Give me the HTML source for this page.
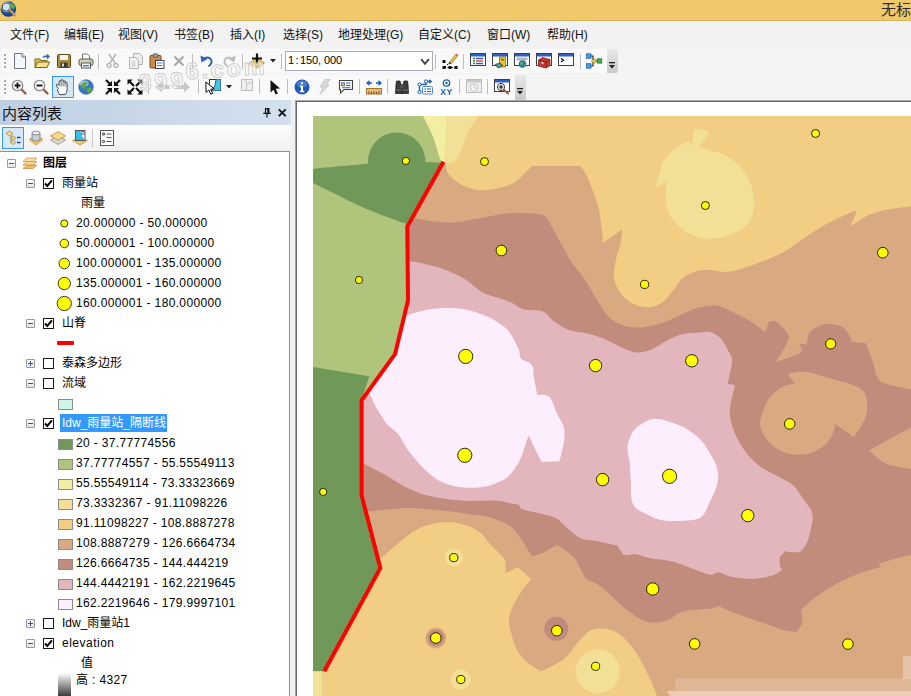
<!DOCTYPE html><html lang="zh"><head><meta charset="utf-8"><title>ArcMap</title><style>
*{box-sizing:border-box;margin:0;padding:0}
html,body{width:911px;height:696px;overflow:hidden;background:#F0F0F0}
body{position:relative;font-family:"Liberation Sans","Noto Sans CJK SC",sans-serif;font-size:12px;color:#000}
.abs{position:absolute}
.title{left:0;top:0;width:911px;height:21px;background:#F0C869;border-bottom:1px solid #D9B45C}
.ttext{left:881px;top:0;height:21px;line-height:20px;font-size:15px;color:#2b2b2b;white-space:nowrap}
.menubar{left:0;top:21px;width:911px;height:27px;background:#F2F2F2}
.mi{top:27px;height:16px;line-height:16px;white-space:nowrap;font-size:12px;color:#111}
.tbarea{left:0;top:48px;width:911px;height:53px;background:#F4F4F4}
.tb{background:#F9F9F9;border-radius:2px}
.grip{width:2px;height:2px;background:#A8A8A8}
.sep{width:1px;height:15px;background:#BDBDBD}
.ovf{background:linear-gradient(#E9E9E9,#C9C9C9);border-radius:0 2px 2px 0}
.combo{left:285px;top:51px;width:148px;height:20px;background:#fff;border:1px solid #A9ADB6}
.combo span{position:absolute;left:2px;top:1px;font-size:11px;line-height:15px;white-space:nowrap}.combo i{display:inline-block;width:6px;text-align:center;font-style:normal}
.toc{left:0;top:100px;width:291px;height:596px;background:#F3F3F3}
.tochead{left:0;top:100px;width:291px;height:25px;background:linear-gradient(90deg,#BFCFE2,#D3E0EE)}
.tochead .t{position:absolute;left:2px;top:3px;font-size:15px;line-height:22px;color:#111}
.toctb{left:0;top:125px;width:291px;height:26px;background:linear-gradient(#FDFDFD,#F0F0F0)}
.tree{left:0;top:151px;width:290px;height:546px;background:#fff;border-top:1px solid #8A8F97;border-right:1px solid #8A8F97}
.row{position:absolute;height:20px;line-height:20px;white-space:nowrap;font-size:12px;letter-spacing:.35px}
.cjk{letter-spacing:0}
.exp{position:absolute;width:9px;height:9px;border:1px solid #9A9A9A;border-radius:1px;background:linear-gradient(#fff,#E4E4E4)}
.exp:before{content:"";position:absolute;left:1px;top:3px;width:5px;height:1px;background:#3C4FA0}
.exp.plus:after{content:"";position:absolute;left:3px;top:1px;width:1px;height:5px;background:#3C4FA0}
.cb{position:absolute;width:11px;height:11px;border:1px solid #1a1a1a;background:#fff}
.sw{position:absolute;width:15px;height:11px;border:1px solid #8C8C8C}
.mapframe{left:295px;top:100px;width:616px;height:596px;background:#fff;border-left:1px solid #A2A2A2;border-top:1px solid #A8A8A8;box-shadow:inset 1px 1px 0 #696969}
.map{position:absolute;left:313px;top:116px}
svg.ic{position:absolute;overflow:visible}
</style></head><body>
<div class="abs title"></div>
<svg class="ic" style="left:0;top:0" width="18" height="19" viewBox="0 0 18 19"><defs><radialGradient id="gg" cx=".4" cy=".35" r=".7"><stop offset="0" stop-color="#2F86D8"/><stop offset="1" stop-color="#0B3878"/></radialGradient></defs><circle cx="8.300" cy="9" r="7.800" fill="url(#gg)"/><path d="M10.500 3.500q2.500-.5 4 1.500.8 2-.3 4-1.500.5-2.200-1t-1.800-1.500q-1-1.500.3-3zM11.500 11q1.500-.5 2.500.5-.5 2-2 2.500-1-1.500-.5-3z" fill="#4FB04A"/><circle cx="6.300" cy="7" r="3.900" fill="#C5E8F6" stroke="#DDE6EA" stroke-width="2.200"/><circle cx="6.300" cy="7" r="4" fill="none" stroke="#4A4A4A" stroke-width="1.100"/><path d="M9.600 10.300l5 5" stroke="#C0703A" stroke-width="2.200" stroke-linecap="round"/><path d="M10 10.200l4.600 4.600" stroke="#F4D9C0" stroke-width=".7" stroke-linecap="round"/></svg>
<div class="abs ttext">无标题 - ArcMap</div>
<div class="abs menubar"></div>
<div class="abs mi" style="left:10px">文件(F)</div>
<div class="abs mi" style="left:64px">编辑(E)</div>
<div class="abs mi" style="left:118px">视图(V)</div>
<div class="abs mi" style="left:174px">书签(B)</div>
<div class="abs mi" style="left:230px">插入(I)</div>
<div class="abs mi" style="left:283px">选择(S)</div>
<div class="abs mi" style="left:338px">地理处理(G)</div>
<div class="abs mi" style="left:418px">自定义(C)</div>
<div class="abs mi" style="left:487px">窗口(W)</div>
<div class="abs mi" style="left:547px">帮助(H)</div>
<div class="abs tbarea"></div>
<div class="abs tb" style="left:1px;top:49px;width:606px;height:24px"></div>
<div class="abs ovf" style="left:607px;top:49px;width:11px;height:24px"></div>
<div class="abs tb" style="left:1px;top:75px;width:514px;height:25px"></div>
<div class="abs ovf" style="left:515px;top:75px;width:11px;height:25px"></div>
<div class="abs grip" style="left:4px;top:54px"></div>
<div class="abs grip" style="left:4px;top:58px"></div>
<div class="abs grip" style="left:4px;top:62px"></div>
<div class="abs grip" style="left:4px;top:66px"></div>
<div class="abs grip" style="left:4px;top:80px"></div>
<div class="abs grip" style="left:4px;top:84px"></div>
<div class="abs grip" style="left:4px;top:88px"></div>
<div class="abs grip" style="left:4px;top:92px"></div>
<div class="abs sep" style="left:98px;top:54px"></div>
<div class="abs sep" style="left:192px;top:54px"></div>
<div class="abs sep" style="left:242px;top:54px"></div>
<div class="abs sep" style="left:281px;top:54px"></div>
<div class="abs sep" style="left:435px;top:54px"></div>
<div class="abs sep" style="left:463px;top:54px"></div>
<div class="abs sep" style="left:580px;top:54px"></div>
<div class="abs sep" style="left:148px;top:79px"></div>
<div class="abs sep" style="left:198px;top:79px"></div>
<div class="abs sep" style="left:259px;top:79px"></div>
<div class="abs sep" style="left:287px;top:79px"></div>
<div class="abs sep" style="left:359px;top:79px"></div>
<div class="abs sep" style="left:387px;top:79px"></div>
<div class="abs sep" style="left:459px;top:79px"></div>
<div class="abs sep" style="left:487px;top:79px"></div>
<svg class="ic" style="left:608px;top:62px" width="8" height="8" viewBox="0 0 8 8"><rect x="1" y="0" width="6" height="1.3" fill="#222"/><path d="M1 3h6L4 6.5z" fill="#222"/></svg>
<svg class="ic" style="left:516px;top:88px" width="8" height="8" viewBox="0 0 8 8"><rect x="1" y="0" width="6" height="1.3" fill="#222"/><path d="M1 3h6L4 6.5z" fill="#222"/></svg>
<div class="abs combo"><span><i>1</i><i>:</i><i>1</i><i>5</i><i>0</i><i style="text-align:left">,</i><i>0</i><i>0</i><i>0</i></span></div>
<svg class="ic" style="left:420px;top:58px" width="10" height="8" viewBox="0 0 10 8"><path d="M1.200 1.200L5 5.800L8.800 1.200" fill="none" stroke="#444" stroke-width="1.900"/></svg>
<svg class="ic" style="left:11.5px;top:53.0px" width="16" height="16" viewBox="0 0 16 16"><path d="M2.5 .5h7.5l3.5 3.5v11.5h-11z" fill="#F4F8FD" stroke="#6F7683"/><path d="M10 .5v3.5h3.5" fill="#DCE6F2" stroke="#6F7683"/></svg>
<svg class="ic" style="left:33.5px;top:53.0px" width="16" height="16" viewBox="0 0 16 16"><path d="M1 14.5v-8.5h5l1 1.5h6v7z" fill="#E3C25A" stroke="#7A6418"/><path d="M1 14.5l2.5-5.5h12l-2.5 5.5z" fill="#F6E08C" stroke="#7A6418"/><path d="M8 5q2-3.5 5-2.5v-2l3 3-3 3v-2q-2.5-.5-5 .5z" fill="#2D6CC0"/></svg>
<svg class="ic" style="left:55.5px;top:53.0px" width="16" height="16" viewBox="0 0 16 16"><rect x="1.5" y="1.5" width="13" height="13" rx="1" fill="#A98E3A" stroke="#5B4A14"/><rect x="4" y="2" width="8" height="5" fill="#F4F4F4"/><rect x="4.5" y="9.5" width="7" height="5" fill="#3A3A3A"/><rect x="6" y="10.5" width="2" height="3" fill="#ddd"/></svg>
<svg class="ic" style="left:77.5px;top:53.0px" width="16" height="16" viewBox="0 0 16 16"><path d="M4.5 6v-5h5l2 2v3" fill="#fff" stroke="#777"/><rect x="1" y="6" width="14" height="6.5" rx="2" fill="#D8D2BC" stroke="#555"/><rect x="3.5" y="10" width="9" height="5" fill="#fff" stroke="#555"/><rect x="5" y="12" width="6" height="1.4" fill="#3A7BD5"/><circle cx="12.5" cy="8" r=".8" fill="#4C4"/></svg>
<svg class="ic" style="left:105.0px;top:53.0px" width="16" height="16" viewBox="0 0 16 16"><path d="M4 1l6 9M11 1l-6 9" stroke="#B4B4B4" stroke-width="1.4" fill="none"/><circle cx="4" cy="12.5" r="2" fill="none" stroke="#B4B4B4" stroke-width="1.3"/><circle cx="11" cy="12.5" r="2" fill="none" stroke="#B4B4B4" stroke-width="1.3"/></svg>
<svg class="ic" style="left:128.0px;top:53.0px" width="16" height="16" viewBox="0 0 16 16"><path d="M5.500 .5h6l3 3v8h-9z" fill="#EDEDED" stroke="#B4B4B4"/><path d="M1.500 4.500h6l3 3v8h-9z" fill="#F2F2F2" stroke="#B4B4B4"/><path d="M3.500 9h4M3.500 11h4M3.500 13h4" stroke="#C4C4C4"/></svg>
<svg class="ic" style="left:149.0px;top:53.0px" width="16" height="16" viewBox="0 0 16 16"><rect x="1" y="2.500" width="11" height="12.500" rx="1" fill="#C98B47" stroke="#7A4B1A"/><rect x="4" y=".8" width="5" height="3.400" rx="1" fill="#9A9A9A" stroke="#555" stroke-width=".7"/><rect x="6.500" y="7.500" width="8.500" height="8" fill="#fff" stroke="#445"/><path d="M8 10h5.500M8 12.500h5.500" stroke="#3A7BD5" stroke-width="1.200"/></svg>
<svg class="ic" style="left:171.0px;top:53.0px" width="16" height="16" viewBox="0 0 16 16"><path d="M3.500 3.500l9 9M12.500 3.500l-9 9" stroke="#ABABAB" stroke-width="2.300"/></svg>
<svg class="ic" style="left:199.0px;top:53.0px" width="16" height="16" viewBox="0 0 16 16"><path d="M4 6.500q5-4 8 0q2 3.500-2.500 7" fill="none" stroke="#2F62B8" stroke-width="2"/><path d="M1.500 2.500l1 7 6-3.500z" fill="#2F62B8"/></svg>
<svg class="ic" style="left:221.0px;top:53.0px" width="16" height="16" viewBox="0 0 16 16"><path d="M12 6.500q-5-4-8 0q-2 3.500 2.500 7" fill="none" stroke="#BDBDBD" stroke-width="2"/><path d="M14.500 2.500l-1 7-6-3.500z" fill="#BDBDBD"/></svg>
<svg class="ic" style="left:249.0px;top:53.0px" width="16" height="16" viewBox="0 0 16 16"><path d="M.5 10l7.500-4.500 7.500 4.500-7.500 5z" fill="#F3CF72" stroke="#B18A2E" stroke-width=".8"/><path d="M8 .5v10M3 5.500h10" stroke="#111" stroke-width="2.200"/></svg>
<svg class="ic" style="left:270px;top:59px" width="6" height="4" viewBox="0 0 6 4"><path d="M0 0h6L3 3.500z" fill="#222"/></svg>
<svg class="ic" style="left:441.5px;top:53.0px" width="16" height="16" viewBox="0 0 16 16"><path d="M2 14.500h11.500M2.500 14.500l5.500-5.500" stroke="#111" stroke-width="1" stroke-dasharray="2 1.500"/><rect x=".5" y="7" width="3" height="3" fill="#111"/><rect x=".5" y="13" width="3" height="3" fill="#111"/><rect x="6.500" y="13" width="3" height="3" fill="#111"/><rect x="12.500" y="13" width="3" height="3" fill="#111"/><path d="M7.500 9l6-7.500 2 1.700-6 7.300z" fill="#EEC04A" stroke="#8A6A1A" stroke-width=".6"/><path d="M13.500 1.500l1-1 2 1.700-1 1z" fill="#E2574C"/><path d="M7.500 9l-.8 2.500 2.800-1z" fill="#333"/></svg>
<svg class="ic" style="left:470.0px;top:52.0px" width="16" height="16" viewBox="0 0 16 16"><rect x=".5" y="1.500" width="15" height="12" fill="#fff" stroke="#3B3F4A"/><rect x="1" y="2" width="14" height="2.500" fill="#2F5FC0"/><path d="M3 6.500h2M3 9h2M3 11.500h2" stroke="#2B8A2B" stroke-width="1.300"/><path d="M6 6.500h7M6 11.500h7" stroke="#2F5FC0" stroke-width="1.300"/><path d="M6 9h7" stroke="#D33" stroke-width="1.300"/></svg>
<svg class="ic" style="left:492.0px;top:52.0px" width="16" height="16" viewBox="0 0 16 16"><rect x=".5" y="1.500" width="15" height="12" fill="#fff" stroke="#3B3F4A"/><rect x="1" y="2" width="14" height="2.500" fill="#2F5FC0"/><rect x="7.500" y="5" width="6" height="10" fill="#E6C530" stroke="#7A6410" stroke-width=".7"/><rect x="9" y="7" width="3" height="1.400" fill="#7A6410"/><path d="M3 12.500l5-1.500 3 2.500-5 2.500z" fill="#3F7FCB" stroke="#224" stroke-width=".6"/><circle cx="7" cy="13.500" r="1.500" fill="#58B04A"/></svg>
<svg class="ic" style="left:514.0px;top:52.0px" width="16" height="16" viewBox="0 0 16 16"><rect x=".5" y="1.500" width="15" height="12" fill="#fff" stroke="#3B3F4A"/><rect x="1" y="2" width="14" height="2.500" fill="#2F5FC0"/><rect x="3" y="6" width="10" height="2" fill="#C9CDD6" stroke="#777" stroke-width=".5"/><circle cx="8.500" cy="12" r="3.800" fill="#2B6FC4"/><path d="M6 10.500q2-1.500 3 0t-1 2.500-2-1zM10 12q1.500 0 1.500 1.500l-1.500 1z" fill="#55B548"/></svg>
<svg class="ic" style="left:536.0px;top:52.0px" width="16" height="16" viewBox="0 0 16 16"><rect x=".5" y="1.500" width="15" height="12" fill="#fff" stroke="#3B3F4A"/><rect x="1" y="2" width="14" height="2.500" fill="#2F5FC0"/><path d="M2.500 8l4-2.500 7.500 2v6l-4 2.500-7.500-2z" fill="#C33B31" stroke="#6A1512" stroke-width=".7"/><path d="M2.500 8l7.500 2 4-2.500M10 10v6" fill="none" stroke="#6A1512" stroke-width=".7"/><rect x="5.500" y="10" width="2" height="1.800" fill="#ddd"/></svg>
<svg class="ic" style="left:558.0px;top:52.0px" width="16" height="16" viewBox="0 0 16 16"><rect x=".5" y="1.500" width="15" height="12" fill="#fff" stroke="#3B3F4A"/><rect x="1" y="2" width="14" height="2.500" fill="#2F5FC0"/><path d="M3 6.500l2.500 1.800-2.500 1.800" fill="none" stroke="#111" stroke-width="1.200"/></svg>
<svg class="ic" style="left:586.0px;top:53.0px" width="16" height="16" viewBox="0 0 16 16"><path d="M3.500 3h3.500v10h-3.500M7 8h6" fill="none" stroke="#222" stroke-width="1.100"/><rect x=".5" y=".8" width="4.500" height="4.500" fill="#3FA0E8" stroke="#1D5C9C" stroke-width=".7"/><rect x=".5" y="10.700" width="4.500" height="4.500" fill="#3FA0E8" stroke="#1D5C9C" stroke-width=".7"/><ellipse cx="8" cy="8" rx="2.200" ry="2" fill="#F3D24A" stroke="#8A6A1A" stroke-width=".7"/><rect x="11.500" y="5.800" width="4.300" height="4.300" fill="#4BB04B" stroke="#1F6A1F" stroke-width=".7"/></svg>
<svg class="ic" style="left:10.5px;top:79.0px" width="16" height="16" viewBox="0 0 16 16"><path d="M9.500 9.500l5 5" stroke="#A05A3A" stroke-width="2.400" stroke-linecap="round"/><circle cx="6.500" cy="6.500" r="5.200" fill="#FAFAFA" stroke="#8E8E8E" stroke-width="1.300"/><path d="M3.500 6.500h6M6.500 3.500v6" stroke="#111" stroke-width="1.800"/></svg>
<svg class="ic" style="left:32.5px;top:79.0px" width="16" height="16" viewBox="0 0 16 16"><path d="M9.500 9.500l5 5" stroke="#A05A3A" stroke-width="2.400" stroke-linecap="round"/><circle cx="6.500" cy="6.500" r="5.200" fill="#FAFAFA" stroke="#8E8E8E" stroke-width="1.300"/><path d="M3.500 6.500h6" stroke="#111" stroke-width="1.800"/></svg>
<div class="abs" style="left:52px;top:76px;width:22px;height:22px;border:1px solid #3399FF;background:#D6E8F8"></div>
<svg class="ic" style="left:55.0px;top:79.0px" width="16" height="16" viewBox="0 0 16 16"><path d="M3.500 9.500l-2-2.500q-.8-1.200.4-1.600t2.200 1.200v-4q0-1 1-1t1 1v-1q0-1 1-1t1 1v1q0-1 1-1t1 1v1.500q0-1 1-1t1 1v6.500q0 3-2 5h-5.500q-1.500-2-2.100-5z" fill="#fff" stroke="#333" stroke-width=".9"/><path d="M6.100 3v4.500M8.100 3v4.500M10.100 3.500v4" stroke="#333" stroke-width=".7"/></svg>
<svg class="ic" style="left:77.5px;top:79.0px" width="16" height="16" viewBox="0 0 16 16"><circle cx="8" cy="8" r="7.300" fill="#3A77C9" stroke="#2A5A9E" stroke-width=".6"/><ellipse cx="6" cy="4.500" rx="4.500" ry="3" fill="#BFD9F5" opacity=".75"/><path d="M3.500 5q2.500-2.500 5.500-2 1.500 1.500-.5 3t-1.500 3.500-2.500-.5-1-4zM9 9.500q2.500-1.500 5 0-.5 3.500-3.500 4.800-2-1.800-1.500-4.800z" fill="#5DAE3F"/></svg>
<svg class="ic" style="left:105.0px;top:79.0px" width="16" height="16" viewBox="0 0 16 16"><path d="M1 1l4.500 4.500M15 1l-4.500 4.500M1 15l4.500-4.500M15 15l-4.500-4.500" stroke="#111" stroke-width="2.200"/><path d="M7 1.800v5.200h-5.200zM9 1.800v5.200h5.200zM7 14.200v-5.200h-5.200zM9 14.200v-5.200h5.200z" fill="#111"/></svg>
<svg class="ic" style="left:127.0px;top:79.0px" width="16" height="16" viewBox="0 0 16 16"><path d="M2.500 2.500l4.500 4.500M13.500 2.500l-4.500 4.500M2.500 13.500l4.500-4.500M13.500 13.500l-4.500-4.500" stroke="#111" stroke-width="2.200"/><path d="M.5 5.700v-5.200h5.200zM15.500 5.700v-5.200h-5.200zM.5 10.300v5.200h5.200zM15.500 10.300v5.200h-5.200z" fill="#111"/></svg>
<svg class="ic" style="left:155.0px;top:79.0px" width="16" height="16" viewBox="0 0 16 16"><path d="M1 8l6-5.500v3.500h7.500v4h-7.500v3.500z" fill="#C8C8C8"/></svg>
<svg class="ic" style="left:175.0px;top:79.0px" width="16" height="16" viewBox="0 0 16 16"><path d="M15 8l-6-5.500v3.500h-7.500v4h7.500v3.500z" fill="#C8C8C8"/></svg>
<svg class="ic" style="left:205.0px;top:79.0px" width="16" height="16" viewBox="0 0 16 16"><rect x="4.500" y=".5" width="11" height="11" fill="#fff" stroke="#333"/><path d="M7 11.500l3-5 1-6h4.500v11z" fill="#3CC3EE"/><path d="M11 .5l-1 6-3 5" fill="none" stroke="#333" stroke-width=".8"/><path d="M.8 3l.3 10.500 2.700-2.500 2 4.300 1.900-.9-2-4.200 3.600-.4z" fill="#fff" stroke="#111" stroke-width="1"/></svg>
<svg class="ic" style="left:226px;top:85px" width="6" height="4" viewBox="0 0 6 4"><path d="M0 0h6L3 3.500z" fill="#222"/></svg>
<svg class="ic" style="left:238.5px;top:77.0px" width="16" height="16" viewBox="0 0 16 16"><rect x="2.500" y="2.500" width="11" height="11" fill="#EFEFEF" stroke="#BDBDBD"/><path d="M6 2.500l2 4.500 5-2M8 7l-1 6.500" fill="none" stroke="#C6C6C6"/></svg>
<svg class="ic" style="left:267.0px;top:79.0px" width="16" height="16" viewBox="0 0 16 16"><path d="M3.500 1v12.500l3-2.800 2.200 4.800 2.200-1-2.200-4.700 4.300-.3z" fill="#111"/></svg>
<svg class="ic" style="left:293.5px;top:79.0px" width="16" height="16" viewBox="0 0 16 16"><circle cx="8" cy="8" r="7.500" fill="#1F57B5"/><ellipse cx="8" cy="5" rx="5.500" ry="3.500" fill="#6C9BE6" opacity=".55"/><path d="M6 6.800h3v5h1.300v1.400h-4.600v-1.400h1.300v-3.600h-1zM7 3.200h2v2h-2z" fill="#fff"/></svg>
<svg class="ic" style="left:316.0px;top:79.0px" width="16" height="16" viewBox="0 0 16 16"><path d="M9 .5h5l-4 5.500h3l-9 9.500 3-7.500h-3z" fill="#D9D9D9" stroke="#B9B9B9" stroke-width=".7"/></svg>
<svg class="ic" style="left:337.5px;top:79.0px" width="16" height="16" viewBox="0 0 16 16"><path d="M1.500 1.500h13v9h-8.500l-3.500 3.500v-3.500h-1z" fill="#fff" stroke="#444" stroke-width="1.100"/><rect x="3.500" y="3.800" width="3" height="3" fill="#E8C43C" stroke="#2F5FC0" stroke-width=".8"/><path d="M8 4h4.500M8 6.500h4.500M4 8.700h8.500" stroke="#2F5FC0" stroke-width="1.100"/></svg>
<svg class="ic" style="left:366.0px;top:79.0px" width="16" height="16" viewBox="0 0 16 16"><path d="M1 4h5M10 4h5" stroke="#1D5FAF" stroke-width="1.600"/><path d="M0 4l3.500-3v6zM16 4l-3.500-3v6z" fill="#1D5FAF"/><rect x=".5" y="9.500" width="15" height="5.500" fill="#E8BE78" stroke="#A8742C"/><path d="M3 12v3M5.500 12.800v2.200M8 12v3M10.500 12.800v2.200M13 12v3" stroke="#6A4414" stroke-width=".9"/></svg>
<svg class="ic" style="left:393.5px;top:79.0px" width="16" height="16" viewBox="0 0 16 16"><path d="M2.500 2h3.500l1 3.500 1 9h-6.500l.5-9zM10 2h3.500l.5 3.500.5 9h-6.500l1-9z" fill="#3A3A3A" stroke="#111" stroke-width=".7"/><rect x="6.500" y="5" width="3" height="4" fill="#555"/><path d="M2 11h5M9 11h5" stroke="#777" stroke-width="1"/></svg>
<svg class="ic" style="left:416.5px;top:79.0px" width="16" height="16" viewBox="0 0 16 16"><path d="M2.500 12v-6.500h6.500v-3h4" fill="none" stroke="#1D5FAF" stroke-width="1.300"/><path d="M12 .2l3.500 2.300-3.500 2.300z" fill="#1D5FAF"/><circle cx="2.500" cy="5.500" r="1.600" fill="#fff" stroke="#1D5FAF"/><circle cx="9" cy="2.500" r="1.600" fill="#fff" stroke="#1D5FAF"/><circle cx="2.500" cy="13" r="1.600" fill="#fff" stroke="#1D5FAF"/><rect x="5.500" y="7.500" width="10" height="7.500" rx="1" fill="#F4F8FD" stroke="#5A8AC8"/><path d="M7.500 10h1.500M10 10h4M7.500 12.500h1.500M10 12.500h4" stroke="#1D5FAF" stroke-width="1"/></svg>
<svg class="ic" style="left:439px;top:79px" width="15" height="16" viewBox="0 0 15 16"><circle cx="7.500" cy="4" r="3.200" fill="#fff" stroke="#1D5FAF" stroke-width="1.300"/><circle cx="7.500" cy="4" r="1.200" fill="#1D5FAF"/><text x="7.500" y="15.500" text-anchor="middle" font-family="Liberation Sans,sans-serif" font-weight="700" font-size="8.500" fill="#1D5FAF" letter-spacing=".5">XY</text></svg>
<svg class="ic" style="left:466.0px;top:78.0px" width="16" height="16" viewBox="0 0 16 16"><rect x=".5" y="1.500" width="15" height="13" fill="#EDEDED" stroke="#BDBDBD"/><rect x="1" y="2" width="14" height="2.500" fill="#C9C9C9"/><circle cx="8" cy="9.500" r="3.800" fill="#F6F6F6" stroke="#C2C2C2"/><path d="M8 7v2.500l2 1" fill="none" stroke="#C2C2C2"/></svg>
<svg class="ic" style="left:494.0px;top:78.0px" width="16" height="16" viewBox="0 0 16 16"><rect x=".5" y="1.500" width="15" height="12" fill="#fff" stroke="#3B3F4A"/><rect x="1" y="2" width="14" height="2.500" fill="#2F5FC0"/><path d="M9.500 11.500l4.500 4" stroke="#A05A3A" stroke-width="2" stroke-linecap="round"/><circle cx="7" cy="9" r="3.600" fill="#fff" stroke="#333" stroke-width="1"/><path d="M4.800 9h4.400M7 6.800v4.400" stroke="#111" stroke-width="1.200"/></svg>
<svg class="ic" style="left:80px;top:48px" width="220" height="60" viewBox="80 48 220 60"><text transform="rotate(-3.500 140 91)" x="139" y="91" font-family="Liberation Sans,sans-serif" font-weight="700" font-size="23.500" letter-spacing="2.800" fill="#fff" fill-opacity=".38" stroke="#C2C2C2" stroke-opacity=".85" stroke-width=".9" stroke-linejoin="round">999<tspan dy="-9">6.com</tspan></text></svg>
<div class="abs toc"></div>
<div class="abs tochead"><div class="t">内容列表</div></div>
<svg class="ic" style="left:262.500px;top:108px" width="8" height="9.500" viewBox="0 0 8 9.500"><path d="M2 .6h4.500M2.500 .6v4.400M5.800 .6v4.400M4.900 .6v4.400M.3 5.300h7.400M4 5.300v4.200" stroke="#111" stroke-width="1.200" fill="none"/></svg>
<svg class="ic" style="left:278px;top:109px" width="8.500" height="7.500" viewBox="0 0 8.500 7.500"><path d="M.8 .4l6.900 6.700M7.700 .4l-6.900 6.700" stroke="#111" stroke-width="1.900"/></svg>
<div class="abs toctb"></div>
<div class="abs" style="left:2px;top:127px;width:22px;height:22px;border:1px solid #3399FF;background:#D6E8F8"></div>
<svg class="ic" style="left:5.0px;top:130.0px" width="16" height="16" viewBox="0 0 16 16"><path d="M6 3.500v9h4M6 7.500h4" fill="none" stroke="#777" stroke-width=".8"/><path d="M1 3.500l3.500-2.500 3.500 2.500-3.500 2.500z" fill="#F6D88C" stroke="#B98A30" stroke-width=".8"/><path d="M5.500 8l2.700-2 2.700 2-2.700 2z" fill="#F6D88C" stroke="#B98A30" stroke-width=".8"/><path d="M5.500 12.500l2.700-2 2.700 2-2.700 2z" fill="#F6D88C" stroke="#B98A30" stroke-width=".8"/><path d="M12 7.500h3.500M12 12.500h3.500" stroke="#1D4F8F" stroke-width="1.500"/></svg>
<svg class="ic" style="left:27.5px;top:130.0px" width="16" height="16" viewBox="0 0 16 16"><path d="M1 9.500l7 5.500 7-5.500-3-1.500h-8z" fill="#F3C86C" stroke="#B98A30" stroke-width=".7"/><path d="M4 3v7q4 2.500 8 0v-7z" fill="#C9CED6" stroke="#6F7683" stroke-width=".8"/><ellipse cx="8" cy="3" rx="4" ry="1.800" fill="#EEF1F5" stroke="#6F7683" stroke-width=".8"/></svg>
<svg class="ic" style="left:49.5px;top:130.0px" width="16" height="16" viewBox="0 0 16 16"><path d="M.5 10l7.500-4 7.500 4-7.500 4.500z" fill="#DADADA" stroke="#8A8A8A" stroke-width=".8"/><path d="M.5 6l7.500-4.500 7.500 4.500-7.500 4.500z" fill="#F6D88C" stroke="#B98A30" stroke-width=".8"/></svg>
<svg class="ic" style="left:71.5px;top:130.0px" width="16" height="16" viewBox="0 0 16 16"><path d="M.5 10.500l7.500-3 7.500 3-7.500 4.500z" fill="#F3C86C" stroke="#B98A30" stroke-width=".7"/><rect x="3.500" y=".5" width="9.500" height="10" fill="#fff" stroke="#444" stroke-width=".9"/><path d="M3.900 .9h4.500l1.500 5 3 4.200h-9z" fill="#35BDEB"/><rect x="9.500" y="1.500" width="2.500" height="3" fill="#ccc" stroke="#444" stroke-width=".5"/></svg>
<div class="abs sep" style="left:92px;top:129px;height:18px;background:#C8C8C8"></div>
<svg class="ic" style="left:98.5px;top:130.0px" width="16" height="16" viewBox="0 0 16 16"><rect x="1.500" y=".5" width="13" height="15" fill="#fff" stroke="#555"/><circle cx="4.500" cy="4" r="1.100" fill="none" stroke="#111" stroke-width=".9"/><circle cx="4.500" cy="11.500" r="1.100" fill="none" stroke="#111" stroke-width=".9"/><path d="M7.500 4h5M7.500 7.700h5M7.500 11.500h5" stroke="#555" stroke-width="1"/></svg>
<div class="abs tree"></div>
<div class="exp" style="left:7px;top:159px"></div>
<svg class="ic" style="left:22.0px;top:155.0px" width="16" height="16" viewBox="0 0 16 16"><path d="M1 13.500l4-3.500h10l-4 3.500z" fill="#F0B866" stroke="#C28A3A" stroke-width=".7"/><path d="M1 10l4-3.500h10l-4 3.500z" fill="#F6D496" stroke="#C28A3A" stroke-width=".7"/><path d="M1 6.500l4-3.500h10l-4 3.500z" fill="#F9E0B0" stroke="#C28A3A" stroke-width=".7"/></svg>
<div class="row cjk" style="left:43px;top:153px;font-weight:700">图层</div>
<div class="exp" style="left:26px;top:179px"></div>
<div class="cb" style="left:43px;top:178px"></div>
<svg class="ic" style="left:44px;top:179px" width="9" height="9" viewBox="0 0 9 9"><path d="M1 4.500l2.300 2.500 4.600-5.600" fill="none" stroke="#000" stroke-width="2"/></svg>
<div class="row cjk" style="left:62px;top:173px;">雨量站</div>
<div class="row cjk" style="left:81px;top:193px;">雨量</div>
<svg class="ic" style="left:55px;top:213px" width="18" height="20" viewBox="0 0 18 20"><circle cx="9.300" cy="10.500" r="3.6" fill="#FFFF00" stroke="#222" stroke-width=".9"/></svg>
<div class="row " style="left:76px;top:213px;">20.000000 - 50.000000</div>
<svg class="ic" style="left:55px;top:233px" width="18" height="20" viewBox="0 0 18 20"><circle cx="9.300" cy="10.500" r="4.3" fill="#FFFF00" stroke="#222" stroke-width=".9"/></svg>
<div class="row " style="left:76px;top:233px;">50.000001 - 100.000000</div>
<svg class="ic" style="left:55px;top:253px" width="18" height="20" viewBox="0 0 18 20"><circle cx="9.300" cy="10.500" r="5.3" fill="#FFFF00" stroke="#222" stroke-width=".9"/></svg>
<div class="row " style="left:76px;top:253px;">100.000001 - 135.000000</div>
<svg class="ic" style="left:55px;top:273px" width="18" height="20" viewBox="0 0 18 20"><circle cx="9.300" cy="10.500" r="6.2" fill="#FFFF00" stroke="#222" stroke-width=".9"/></svg>
<div class="row " style="left:76px;top:273px;">135.000001 - 160.000000</div>
<svg class="ic" style="left:55px;top:293px" width="18" height="20" viewBox="0 0 18 20"><circle cx="9.300" cy="10.500" r="7.1" fill="#FFFF00" stroke="#222" stroke-width=".9"/></svg>
<div class="row " style="left:76px;top:293px;">160.000001 - 180.000000</div>
<div class="exp" style="left:26px;top:319px"></div>
<div class="cb" style="left:43px;top:318px"></div>
<svg class="ic" style="left:44px;top:319px" width="9" height="9" viewBox="0 0 9 9"><path d="M1 4.500l2.300 2.500 4.600-5.600" fill="none" stroke="#000" stroke-width="2"/></svg>
<div class="row cjk" style="left:62px;top:313px;">山脊</div>
<div class="abs" style="left:57px;top:341px;width:17px;height:3.5px;background:#FF0000;border-radius:1px"></div>
<div class="exp plus" style="left:26px;top:359px"></div>
<div class="cb" style="left:43px;top:358px"></div>
<div class="row cjk" style="left:62px;top:353px;">泰森多边形</div>
<div class="exp" style="left:26px;top:379px"></div>
<div class="cb" style="left:43px;top:378px"></div>
<div class="row cjk" style="left:62px;top:373px;">流域</div>
<div class="sw" style="left:58px;top:399px;background:#CDF5E8"></div>
<div class="exp" style="left:26px;top:419px"></div>
<div class="cb" style="left:43px;top:418px"></div>
<svg class="ic" style="left:44px;top:419px" width="9" height="9" viewBox="0 0 9 9"><path d="M1 4.500l2.300 2.500 4.600-5.600" fill="none" stroke="#000" stroke-width="2"/></svg>
<div class="abs" style="left:60px;top:414px;width:107px;height:18px;background:#3399FF"></div>
<div class="row cjk" style="left:62px;top:413px;color:#fff">Idw_雨量站_隔断线</div>
<div class="sw" style="left:58px;top:439px;background:#709959"></div>
<div class="row " style="left:76px;top:433px;">20 - 37.77774556</div>
<div class="sw" style="left:58px;top:459px;background:#B0C47C"></div>
<div class="row " style="left:76px;top:453px;">37.77774557 - 55.55549113</div>
<div class="sw" style="left:58px;top:479px;background:#F2EEA2"></div>
<div class="row " style="left:76px;top:473px;">55.55549114 - 73.33323669</div>
<div class="sw" style="left:58px;top:499px;background:#F2E096"></div>
<div class="row " style="left:76px;top:493px;">73.3332367 - 91.11098226</div>
<div class="sw" style="left:58px;top:519px;background:#F2CE85"></div>
<div class="row " style="left:76px;top:513px;">91.11098227 - 108.8887278</div>
<div class="sw" style="left:58px;top:539px;background:#D9A982"></div>
<div class="row " style="left:76px;top:533px;">108.8887279 - 126.6664734</div>
<div class="sw" style="left:58px;top:559px;background:#C28C7C"></div>
<div class="row " style="left:76px;top:553px;">126.6664735 - 144.444219</div>
<div class="sw" style="left:58px;top:579px;background:#E3B6BE"></div>
<div class="row " style="left:76px;top:573px;">144.4442191 - 162.2219645</div>
<div class="sw" style="left:58px;top:599px;background:#FCEEFC"></div>
<div class="row " style="left:76px;top:593px;">162.2219646 - 179.9997101</div>
<div class="exp plus" style="left:26px;top:619px"></div>
<div class="cb" style="left:43px;top:618px"></div>
<div class="row cjk" style="left:62px;top:613px;">Idw_雨量站1</div>
<div class="exp" style="left:26px;top:639px"></div>
<div class="cb" style="left:43px;top:638px"></div>
<svg class="ic" style="left:44px;top:639px" width="9" height="9" viewBox="0 0 9 9"><path d="M1 4.500l2.300 2.500 4.600-5.600" fill="none" stroke="#000" stroke-width="2"/></svg>
<div class="row " style="left:62px;top:633px;letter-spacing:.5px">elevation</div>
<div class="row cjk" style="left:81px;top:653px;">值</div>
<div class="abs" style="left:58px;top:673px;width:13px;height:24px;background:linear-gradient(#fff,#333)"></div>
<div class="row" style="left:76px;top:670px">高 : 4327</div>
<div class="abs mapframe"></div>
<svg class="map" width="598" height="580" viewBox="313 116 598 580" shape-rendering="geometricPrecision">
<rect x="313" y="116" width="598" height="580" fill="#F2CE85"/>
<path d="M313.0 116.0L423.0 116.0C423.0 116.0 430.2 129.4 433.0 136.3C435.8 143.2 437.8 152.9 439.5 157.2C441.2 161.5 443.5 162.0 443.5 162.0L407.3 226.4L408.0 300.4L395.0 354.2L361.6 400.3L361.6 495.2L380.3 568.1L324.3 671.3L313.0 671.3L313.0 116.0Z" fill="#B0C47C"/>
<path d="M313.0 170.4C313.0 170.4 309.9 169.5 314.4 168.8C318.9 168.1 331.0 167.1 340.0 166.3C349.0 165.5 368.2 163.8 368.2 163.8C368.2 163.8 368.0 159.7 368.2 158.0C368.4 156.3 368.6 155.5 369.2 153.6C369.8 151.7 370.8 148.9 372.0 146.8C373.2 144.7 374.8 142.6 376.5 140.8C378.2 139.1 380.3 137.5 382.4 136.3C384.5 135.1 386.9 134.1 389.3 133.5C391.7 132.9 394.2 132.5 396.7 132.5C399.2 132.5 401.7 132.9 404.1 133.5C406.5 134.1 408.8 135.1 410.9 136.3C413.0 137.5 415.1 139.1 416.9 140.8C418.6 142.6 420.2 144.7 421.4 146.8C422.6 148.9 423.6 151.7 424.2 153.6C424.8 155.5 425.0 156.6 425.2 158.0C425.4 159.4 425.3 162.0 425.3 162.0L441.7 162.7L406.6 223.7C406.6 223.7 402.9 222.7 397.8 220.9C392.7 219.1 383.2 215.6 375.9 212.7C368.6 209.8 361.2 206.7 353.9 203.3C346.6 199.9 338.8 195.7 332.0 192.3C325.2 188.9 313.0 182.9 313.0 182.9L313.0 170.4Z" fill="#709959"/>
<path d="M313.0 367.0L369.3 376.2C369.3 376.2 365.1 389.7 363.8 393.7C362.5 397.7 361.6 400.3 361.6 400.3L361.6 495.2L380.3 568.1L324.3 671.3L313.0 671.3L313.0 367.0Z" fill="#709959"/>
<path d="M423.0 116.0L446.1 116.0C446.1 116.0 446.0 135.4 445.7 143.0C445.4 150.6 444.4 161.8 444.4 161.8L443.5 162.0C443.5 162.0 441.2 161.5 439.5 157.2C437.8 152.9 435.8 143.2 433.0 136.3C430.2 129.4 423.0 116.0 423.0 116.0Z" fill="#F2EEA2"/>
<path d="M446.1 116.0L479.0 116.0C479.0 116.0 470.9 126.4 468.0 132.0C465.1 137.6 463.7 144.6 461.5 149.5C459.3 154.4 457.6 159.3 455.0 161.6C452.4 163.8 446.0 163.0 446.0 163.0L444.4 161.8C444.4 161.8 445.4 150.6 445.7 143.0C446.0 135.4 446.1 116.0 446.1 116.0Z" fill="#F2E096"/>
<path d="M313.0 671.3L322.0 671.3L322.0 696.0L313.0 696.0L313.0 671.3Z" fill="#F2E096"/>
<path d="M444.0 162.0C444.0 162.0 445.3 164.1 446.0 166.0C446.7 167.9 446.1 170.8 448.3 173.7C450.5 176.6 454.9 180.9 459.3 183.5C463.7 186.1 470.3 188.4 474.7 189.5C479.1 190.6 481.6 190.3 485.6 190.1C489.6 189.8 494.7 188.9 498.8 188.0C502.9 187.1 506.7 186.1 510.0 184.6C513.3 183.1 515.1 182.1 518.8 179.0C522.5 175.9 532.0 166.0 532.0 166.0L580.3 166.0C580.3 166.0 584.2 170.6 586.8 175.9C589.3 181.2 593.4 191.2 595.6 197.8C597.8 204.4 598.7 207.9 600.0 215.4C601.3 222.9 603.3 242.8 603.3 242.8L622.0 229.6C622.0 229.6 622.0 236.3 620.9 241.7C619.8 247.1 616.5 255.7 615.4 262.0C614.3 268.3 613.2 274.1 614.3 279.6C615.4 285.1 618.5 290.7 622.0 294.9C625.5 299.1 630.4 302.8 635.1 304.8C639.9 306.8 645.7 307.6 650.5 307.0C655.3 306.4 659.7 304.6 663.7 301.5C667.7 298.4 671.4 292.3 674.7 288.3C678.0 284.3 679.8 280.2 683.4 277.4C687.0 274.5 692.2 272.4 696.6 271.2C701.0 270.0 705.6 269.9 710.0 270.0C714.4 270.1 718.5 271.9 723.2 271.9C728.0 271.8 732.3 271.3 738.5 269.7C744.7 268.1 753.2 264.8 760.5 262.0C767.8 259.2 775.4 256.4 782.4 252.7C789.4 248.9 795.2 244.1 802.2 239.5C809.2 234.9 817.6 229.1 824.2 225.3C830.8 221.5 836.2 219.1 841.7 216.5C847.2 213.9 857.1 209.9 857.1 209.9L850.5 226.4C850.5 226.4 862.1 218.2 868.0 215.4C873.9 212.7 878.4 211.4 885.6 209.9C892.8 208.4 911.0 206.6 911.0 206.6L911.0 696.0L657.1 696.0C657.1 696.0 653.4 686.4 650.5 680.1C647.6 673.8 643.5 664.8 639.5 658.2C635.5 651.6 630.8 645.2 626.4 640.6C622.0 636.0 618.0 632.7 613.2 630.7C608.4 628.7 602.2 628.1 597.8 628.5C593.4 628.9 590.4 630.1 586.8 632.9C583.1 635.6 579.5 640.8 575.9 645.0C572.2 649.2 569.5 654.4 564.9 658.2C560.3 662.0 552.4 665.8 548.4 668.0C544.4 670.2 540.7 671.3 540.7 671.3C540.7 671.3 531.6 666.2 527.6 662.6C523.6 659.0 519.5 655.1 516.6 649.4C513.7 643.7 511.3 633.4 510.0 628.5C508.7 623.6 509.0 622.4 509.0 620.0C509.0 617.6 509.5 616.3 510.0 614.3C510.5 612.2 510.4 611.4 512.2 607.7C514.0 604.0 517.9 597.1 521.0 592.3C524.1 587.5 530.9 579.1 530.9 579.1L517.7 567.1C517.7 567.1 512.0 570.5 510.0 571.4C507.9 572.3 505.4 572.5 505.4 572.5C505.4 572.5 506.1 564.5 505.4 561.6C504.7 558.7 503.6 557.9 501.0 555.0C498.4 552.1 493.3 547.6 490.0 544.0C486.7 540.4 484.8 536.6 481.2 533.6C477.6 530.6 473.2 527.9 468.1 526.0C463.0 524.1 456.4 522.4 450.5 522.0C444.6 521.6 438.8 522.4 432.9 523.8C427.0 525.2 421.2 527.1 415.4 530.4C409.5 533.7 402.9 539.4 397.8 543.5C392.7 547.6 388.3 552.2 385.0 555.0C381.7 557.8 378.0 560.0 378.0 560.0L361.6 495.2L361.6 400.3L395.0 354.2L408.0 300.4L407.3 226.4L444.0 162.0Z" fill="#D9A982"/>
<path d="M412.3 218.0C412.3 218.0 414.5 218.2 417.6 218.7C420.7 219.2 424.9 220.2 430.7 220.9C436.5 221.6 445.4 222.9 452.7 222.6C460.0 222.3 467.4 220.4 474.7 219.1C482.0 217.8 490.7 215.9 496.6 214.9C502.5 213.9 504.1 213.4 510.0 213.2C515.9 213.0 526.2 213.0 532.0 213.6C537.8 214.2 541.3 213.7 545.0 216.5C548.7 219.3 550.7 225.0 554.0 230.7C557.3 236.4 562.0 245.3 564.9 250.5C567.8 255.7 568.2 257.1 571.5 262.0C574.8 266.9 580.2 273.0 584.6 279.6C589.0 286.2 593.8 295.3 597.8 301.5C601.8 307.7 604.4 312.9 608.8 316.9C613.2 320.9 618.7 323.9 624.2 325.7C629.7 327.4 635.1 327.9 641.7 327.4C648.3 326.8 657.1 324.5 663.7 322.4C670.3 320.3 675.7 317.1 681.2 314.7C686.7 312.3 691.8 309.6 696.6 308.1C701.4 306.6 706.3 306.3 710.0 305.9C713.7 305.5 714.0 304.4 718.8 305.9C723.5 307.4 732.6 311.8 738.5 314.7C744.4 317.6 749.5 320.6 753.9 323.5C758.3 326.4 764.9 332.3 764.9 332.3L769.3 321.3L775.9 321.3C775.9 321.3 784.8 329.0 786.8 332.3C788.8 335.6 789.7 336.1 787.9 341.0C786.1 345.9 775.9 361.9 775.9 361.9C775.9 361.9 793.4 356.2 797.8 354.2C802.2 352.2 802.2 349.8 802.2 349.8L798.9 343.7L806.6 344.3C806.6 344.3 807.7 335.4 809.9 332.3C812.1 329.2 816.3 327.1 819.8 325.7C823.3 324.3 826.7 323.5 830.7 323.9C834.7 324.3 840.2 324.9 843.9 327.9C847.6 330.9 852.7 342.1 852.7 342.1L865.9 343.2C865.9 343.2 870.7 355.3 872.5 360.8C874.3 366.3 874.7 372.4 876.9 376.2C879.1 380.0 879.9 381.6 885.6 383.8C891.3 386.0 911.0 389.3 911.0 389.3L911.0 555.0C911.0 555.0 901.9 556.8 896.6 558.3C891.3 559.8 879.0 563.8 879.0 563.8L881.2 567.1C881.2 567.1 867.3 570.5 859.3 573.6C851.2 576.7 840.6 581.5 832.9 585.7C825.2 589.9 818.5 594.9 813.2 598.9C807.9 602.9 801.1 609.9 801.1 609.9C801.1 609.9 802.9 619.4 802.2 623.0C801.5 626.6 796.7 631.8 796.7 631.8C796.7 631.8 790.3 631.4 786.8 630.7C783.3 630.0 781.4 629.2 775.9 627.4C770.4 625.6 761.2 622.2 753.9 619.7C746.6 617.2 737.9 614.4 732.0 612.1C726.1 609.8 718.8 606.1 718.8 606.1C718.8 606.1 714.4 608.2 710.0 608.8C705.6 609.4 697.0 609.3 692.2 609.9C687.4 610.5 685.2 610.5 681.2 612.1C677.2 613.7 672.5 618.0 668.1 619.7C663.7 621.5 659.3 622.6 654.9 622.6C650.5 622.6 646.8 622.2 641.7 619.7C636.6 617.2 629.7 612.1 624.2 607.7C618.7 603.3 613.2 597.2 608.8 593.4C604.4 589.5 601.5 587.0 597.8 584.6C594.1 582.2 589.4 581.1 586.8 579.1C584.2 577.1 584.6 576.1 582.4 572.5C580.2 568.9 577.9 561.8 573.7 557.2C569.5 552.6 557.2 545.1 557.2 545.1C557.2 545.1 547.1 550.9 542.9 552.8C538.7 554.7 532.0 556.5 532.0 556.5C532.0 556.5 524.7 544.2 521.0 539.1C517.3 534.0 515.2 529.6 510.0 526.0C504.8 522.4 497.0 519.2 490.0 517.2C483.0 515.2 476.2 515.0 468.1 513.9C460.1 512.8 449.8 511.5 441.7 510.6C433.6 509.7 427.1 508.8 419.8 508.4C412.5 508.0 406.8 507.8 397.8 508.4C388.8 508.9 365.8 511.7 365.8 511.7L361.6 495.2L361.6 400.3L395.0 354.2L408.0 300.4L407.3 226.4L412.3 218.0Z" fill="#C28C7C"/>
<path d="M762.0 414.0C763.5 409.1 765.9 402.6 769.3 398.1C772.7 393.6 778.2 389.5 782.4 387.1C786.6 384.7 794.5 383.8 794.5 383.8L787.9 374.0C787.9 374.0 797.3 371.1 804.4 371.8C811.5 372.5 822.7 376.2 830.7 378.4C838.8 380.6 847.2 382.7 852.7 384.9C858.2 387.1 861.3 388.6 863.7 391.5C866.1 394.4 866.5 398.8 867.0 402.5C867.5 406.2 867.4 410.2 866.5 414.0C865.6 417.8 863.6 421.1 861.5 425.0C859.4 428.9 853.8 437.1 853.8 437.1L835.1 423.9C835.1 423.9 833.6 433.8 830.7 438.2C827.8 442.6 822.4 447.5 817.6 450.2C812.9 452.9 807.7 454.2 802.2 454.6C796.7 455.0 790.1 454.4 784.6 452.4C779.1 450.4 773.3 446.7 769.3 442.5C765.3 438.3 761.7 431.9 760.5 427.2C759.3 422.4 760.5 418.9 762.0 414.0Z" fill="#D9A982"/>
<path d="M911.0 427.2L869.2 450.2C869.2 450.2 878.6 460.3 885.6 463.4C892.6 466.5 911.0 468.9 911.0 468.9L911.0 427.2Z" fill="#D9A982"/>
<path d="M408.0 262.0C408.0 262.0 409.8 260.9 415.4 262.0C421.0 263.1 433.6 265.9 441.7 268.6C449.8 271.4 457.8 275.2 463.7 278.5C469.6 281.8 473.2 285.8 476.9 288.3C480.5 290.9 480.1 291.5 485.6 293.8C491.1 296.1 503.7 299.4 510.0 302.0C516.3 304.6 517.7 307.6 523.2 309.2C528.7 310.8 537.8 309.4 542.9 311.4C548.0 313.4 549.5 318.2 553.9 321.3C558.3 324.4 563.1 327.9 569.3 330.1C575.5 332.3 585.0 332.8 591.2 334.4C597.4 336.0 601.1 337.5 606.6 339.9C612.1 342.3 619.1 346.6 624.2 348.7C629.3 350.8 632.9 352.3 637.3 352.5C641.7 352.7 645.4 351.9 650.5 349.8C655.6 347.7 663.0 342.5 668.1 339.9C673.2 337.3 676.5 335.6 681.2 334.4C686.0 333.2 691.8 333.1 696.6 332.7C701.4 332.3 705.9 331.0 710.0 332.0C714.1 333.0 718.1 335.8 721.0 338.8C723.9 341.8 725.8 346.1 727.6 349.8C729.4 353.5 732.0 355.1 732.0 360.8C732.0 366.5 727.6 383.8 727.6 383.8L735.2 384.9C735.2 384.9 731.8 397.6 730.9 402.5C730.0 407.4 729.3 409.1 729.8 414.0C730.3 418.9 731.5 425.4 734.1 431.6C736.7 437.8 740.7 445.5 745.1 451.3C749.5 457.1 754.6 462.3 760.5 466.7C766.4 471.1 774.8 474.6 780.3 477.7C785.8 480.8 789.8 482.1 793.4 485.4C797.0 488.7 799.1 492.8 802.2 497.4C805.3 502.0 810.6 507.7 812.1 512.8C813.6 517.9 811.9 523.1 811.0 528.2C810.1 533.3 808.4 539.5 806.6 543.5C804.8 547.5 800.0 552.3 800.0 552.3C800.0 552.3 791.3 552.3 789.0 552.0C786.7 551.7 786.0 550.5 786.0 550.5L779.8 557.0C779.8 557.0 779.5 563.8 779.8 566.0C780.1 568.2 782.8 568.7 781.4 570.3C780.0 571.9 776.1 574.4 771.5 575.8C766.9 577.2 760.5 578.5 753.9 578.7C747.3 578.9 737.9 577.9 732.0 576.9C726.1 575.9 722.5 572.9 718.8 572.5C715.1 572.1 713.7 575.1 710.0 574.7C706.3 574.3 702.9 572.5 696.6 570.3C690.4 568.1 680.2 563.6 672.5 561.6C664.8 559.6 656.4 559.5 650.5 558.3C644.6 557.1 641.0 555.0 637.3 554.5C633.6 554.0 630.9 555.0 628.5 555.0C626.1 555.0 623.1 554.5 623.1 554.5L617.6 545.7C617.6 545.7 604.0 542.6 597.8 541.3C591.6 540.0 585.8 540.5 580.3 538.0C574.8 535.5 569.3 529.5 564.9 526.0C560.5 522.5 560.8 520.0 553.9 517.2C547.0 514.5 529.1 511.5 523.2 509.5C517.4 507.5 521.0 506.1 518.8 505.1C516.6 504.1 513.7 504.0 510.0 503.3C506.3 502.6 504.3 501.1 496.6 500.7C488.9 500.3 474.7 501.4 463.7 500.7C452.7 500.0 439.8 498.3 430.7 496.3C421.6 494.3 416.9 492.4 408.8 488.6C400.8 484.8 390.3 477.7 382.4 473.3C374.5 468.9 361.6 462.4 361.6 462.4L361.6 400.3L395.0 354.2L408.0 300.4L408.0 262.0Z" fill="#E3B6BE"/>
<path d="M405.5 315.8C405.5 315.8 413.8 312.7 419.8 311.4C425.8 310.1 434.4 308.5 441.7 308.1C449.0 307.7 456.4 307.9 463.7 309.2C471.0 310.5 479.4 313.2 485.6 315.8C491.8 318.4 496.9 321.7 501.0 324.6C505.1 327.5 507.0 328.8 510.0 333.0C513.0 337.2 517.0 345.5 518.8 349.8C520.6 354.1 518.8 356.0 521.0 358.6C523.2 361.2 529.8 361.9 532.0 365.2C534.2 368.5 533.2 373.5 534.1 378.4C535.0 383.3 537.4 394.8 537.4 394.8C537.4 394.8 546.2 393.8 549.5 397.0C552.8 400.2 554.8 409.0 557.2 414.0C559.6 419.0 562.7 422.4 563.8 427.2C564.9 431.9 564.5 436.8 563.8 442.5C563.1 448.2 559.4 461.2 559.4 461.2L541.8 461.9C541.8 461.9 536.3 451.4 534.1 446.9C531.9 442.4 528.7 434.9 528.7 434.9C528.7 434.9 527.0 440.1 525.4 444.7C523.8 449.3 521.4 457.3 518.8 462.3C516.2 467.3 512.6 471.6 510.0 474.5C507.4 477.4 507.3 477.9 503.2 479.9C499.1 481.9 492.2 485.1 485.6 486.4C479.0 487.7 471.0 488.2 463.7 487.5C456.4 486.8 448.3 485.1 441.7 482.0C435.1 478.9 429.7 474.0 424.2 468.9C418.7 463.8 413.2 457.1 408.8 451.3C404.4 445.5 401.5 438.4 397.8 433.8C394.1 429.2 389.7 427.2 386.8 423.9C383.9 420.6 382.1 416.8 380.3 414.0C378.5 411.2 377.9 410.7 375.9 406.9C373.9 403.1 368.5 391.0 368.5 391.0L395.0 354.2L405.5 315.8Z" fill="#FCEEFC"/>
<path d="M627.5 446.9C628.0 441.8 630.5 435.4 632.9 431.6C635.3 427.8 638.0 426.0 641.7 423.9C645.4 421.8 649.8 419.0 654.9 418.8C660.0 418.6 667.0 421.0 672.5 422.8C678.0 424.6 683.0 426.5 687.8 429.4C692.5 432.3 697.5 436.6 701.0 440.3C704.5 444.0 706.1 446.9 708.7 451.3C711.3 455.7 715.1 461.6 716.6 466.7C718.1 471.8 718.8 476.1 717.7 482.0C716.6 487.9 712.8 495.9 710.0 501.8C707.2 507.7 705.1 514.1 701.0 517.2C696.9 520.3 691.8 520.0 685.6 520.5C679.4 521.0 670.3 521.6 663.7 520.5C657.1 519.4 651.2 516.6 646.1 513.9C641.0 511.1 635.5 509.7 632.9 504.0C630.3 498.3 631.2 486.8 630.7 479.9C630.2 472.9 630.1 467.8 629.6 462.3C629.1 456.8 627.0 452.0 627.5 446.9Z" fill="#FCEEFC"/>
<path d="M654.9 188.6C654.9 188.6 657.8 178.4 659.3 173.7C660.8 169.0 660.8 164.9 663.7 160.5C666.6 156.1 672.5 150.5 676.9 147.3C681.3 144.1 690.0 141.2 690.0 141.2L691.5 146.0L694.4 128.7C694.4 128.7 699.4 128.9 702.0 129.5C704.6 130.1 710.0 132.0 710.0 132.0L699.0 146.0C699.0 146.0 706.0 149.3 710.0 150.6C714.0 151.9 718.2 151.6 723.0 154.0C727.8 156.4 734.3 160.9 738.5 164.9C742.7 168.9 745.8 172.5 748.4 178.0C751.0 183.5 753.2 192.0 753.9 197.8C754.6 203.6 753.9 208.6 752.8 213.0C751.7 217.4 750.8 220.5 747.3 224.0C743.8 227.5 738.2 231.5 732.0 234.0C725.8 236.5 716.6 238.8 710.0 239.0C703.4 239.2 697.7 237.6 692.2 235.1C686.7 232.6 680.9 228.2 676.9 224.2C672.9 220.2 669.8 215.4 668.0 211.0C666.2 206.6 666.1 202.9 665.9 197.8C665.7 192.7 667.0 180.3 667.0 180.3L654.9 188.6Z" fill="#F2E096"/>
<circle cx="453.8" cy="557.6" r="9.0" fill="#F2E096"/>
<circle cx="435.8" cy="638.0" r="10.5" fill="#D9A982"/>
<circle cx="435.8" cy="638.0" r="8.5" fill="#C28C7C"/>
<circle cx="460.8" cy="679.5" r="10.0" fill="#F2E096"/>
<circle cx="556.3" cy="628.7" r="12.0" fill="#C28C7C"/>
<circle cx="597.8" cy="671.3" r="22.0" fill="#F2E096"/>
<polyline points="443.5,161.8 407.3,226.4 408.0,300.4 395.0,354.2 361.6,400.3 361.6,495.2 380.3,568.1 324.3,671.3" fill="none" stroke="#FF0000" stroke-width="4" stroke-linejoin="round"/>
<circle cx="405.9" cy="160.9" r="3.6" fill="#FFFF00" stroke="#111" stroke-width="0.9"/>
<circle cx="484.5" cy="161.6" r="4.0" fill="#FFFF00" stroke="#111" stroke-width="0.9"/>
<circle cx="815.6" cy="133.5" r="4.0" fill="#FFFF00" stroke="#111" stroke-width="0.9"/>
<circle cx="705.4" cy="205.5" r="4.0" fill="#FFFF00" stroke="#111" stroke-width="0.9"/>
<circle cx="882.8" cy="252.7" r="5.3" fill="#FFFF00" stroke="#111" stroke-width="0.9"/>
<circle cx="501.4" cy="250.5" r="5.3" fill="#FFFF00" stroke="#111" stroke-width="0.9"/>
<circle cx="359.0" cy="280.0" r="3.6" fill="#FFFF00" stroke="#111" stroke-width="0.9"/>
<circle cx="644.6" cy="284.4" r="4.1" fill="#FFFF00" stroke="#111" stroke-width="0.9"/>
<circle cx="830.7" cy="343.9" r="5.1" fill="#FFFF00" stroke="#111" stroke-width="0.9"/>
<circle cx="465.7" cy="356.4" r="7.1" fill="#FFFF00" stroke="#111" stroke-width="0.9"/>
<circle cx="595.6" cy="365.6" r="6.2" fill="#FFFF00" stroke="#111" stroke-width="0.9"/>
<circle cx="691.8" cy="360.8" r="6.2" fill="#FFFF00" stroke="#111" stroke-width="0.9"/>
<circle cx="789.7" cy="423.9" r="5.3" fill="#FFFF00" stroke="#111" stroke-width="0.9"/>
<circle cx="464.8" cy="455.3" r="7.1" fill="#FFFF00" stroke="#111" stroke-width="0.9"/>
<circle cx="602.6" cy="479.6" r="6.2" fill="#FFFF00" stroke="#111" stroke-width="0.9"/>
<circle cx="669.6" cy="476.3" r="7.1" fill="#FFFF00" stroke="#111" stroke-width="0.9"/>
<circle cx="323.2" cy="491.9" r="3.6" fill="#FFFF00" stroke="#111" stroke-width="0.9"/>
<circle cx="747.8" cy="515.6" r="6.2" fill="#FFFF00" stroke="#111" stroke-width="0.9"/>
<circle cx="453.8" cy="557.6" r="4.1" fill="#FFFF00" stroke="#111" stroke-width="0.9"/>
<circle cx="652.7" cy="589.0" r="6.2" fill="#FFFF00" stroke="#111" stroke-width="0.9"/>
<circle cx="435.8" cy="638.0" r="5.3" fill="#FFFF00" stroke="#111" stroke-width="0.9"/>
<circle cx="556.8" cy="630.7" r="5.3" fill="#FFFF00" stroke="#111" stroke-width="0.9"/>
<circle cx="694.6" cy="643.9" r="5.3" fill="#FFFF00" stroke="#111" stroke-width="0.9"/>
<circle cx="847.9" cy="644.1" r="5.3" fill="#FFFF00" stroke="#111" stroke-width="0.9"/>
<circle cx="595.6" cy="666.3" r="4.1" fill="#FFFF00" stroke="#111" stroke-width="0.9"/>
<circle cx="460.8" cy="679.5" r="4.1" fill="#FFFF00" stroke="#111" stroke-width="0.9"/>
<rect x="675" y="678.5" width="236" height="12.5" fill="#fff" opacity="0.17"/>
<path d="M667 691h244v5h-241z" fill="#fff" opacity="0.42"/>
<rect x="903" y="656" width="8" height="23" fill="#fff" opacity="0.3"/>
</svg>
</body></html>
